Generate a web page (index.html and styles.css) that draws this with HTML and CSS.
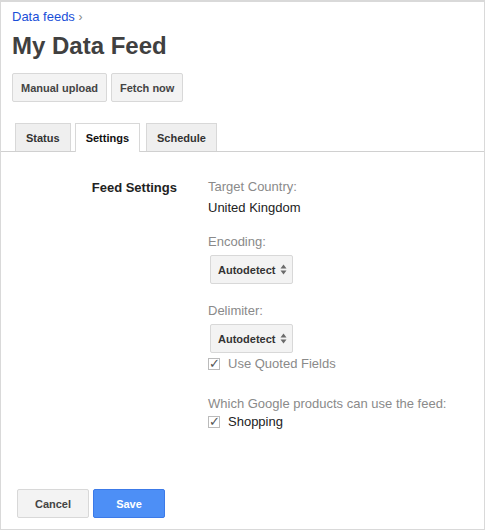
FILE: index.html
```html
<!DOCTYPE html>
<html>

<head>
  <meta charset="utf-8">
  <meta name="viewport" content="width=device-width">
  <title>My Data Feed</title>
  <link rel="stylesheet" href="styles.css">
</head>

<body>
  <div class="frame">
    <header class="top">
      <a class="crumb" href="#">Data feeds</a> <span class="crumb-arrow">›</span>
      <h1>My Data Feed</h1>
      <div class="actions">
        <button class="btn">Manual upload</button>
        <button class="btn">Fetch now</button>
      </div>
    </header>

    <nav class="tabs">
      <span class="tab">Status</span>
      <span class="tab active">Settings</span>
      <span class="tab">Schedule</span>
    </nav>

    <main class="settings">
      <div class="label">Feed Settings</div>
      <div class="fields">
        <div class="field">
          <div class="name">Target Country:</div>
          <div class="value">United Kingdom</div>
        </div>

        <div class="field">
          <div class="name">Encoding:</div>
          <span class="select">Autodetect
            <svg width="7" height="11" viewBox="0 0 7 11"><path d="M3.5 0.5L6.5 4.5H0.5Z M3.5 10.5L6.5 6.5H0.5Z" fill="#6b6b6b"/></svg>
          </span>
        </div>

        <div class="field">
          <div class="name">Delimiter:</div>
          <span class="select">Autodetect
            <svg width="7" height="11" viewBox="0 0 7 11"><path d="M3.5 0.5L6.5 4.5H0.5Z M3.5 10.5L6.5 6.5H0.5Z" fill="#6b6b6b"/></svg>
          </span>
          <label class="check muted"><span class="box">&#10003;</span> Use Quoted Fields</label>
        </div>

        <div class="field products">
          <div class="name">Which Google products can use the feed:</div>
          <label class="check"><span class="box">&#10003;</span> Shopping</label>
        </div>
      </div>
    </main>

    <footer class="bottom">
      <button class="btn">Cancel</button>
      <button class="btn primary">Save</button>
    </footer>
  </div>
</body>

</html>
```

FILE: styles.css
```css
* {
  box-sizing: border-box;
}

body {
  margin: 0;
  background: white;
  font-family: Arial, "Liberation Sans", sans-serif;
  font-size: 13px;
  color: #222;
}

.frame {
  width: 485px;
  height: 530px;
  border: 1px solid #d9d9d9;
  border-top-width: 2px;
  display: flex;
  flex-direction: column;
}

.top {
  padding: 7px 11px 0;
}

.crumb {
  color: #1a4fd8;
  text-decoration: none;
  font-size: 13px;
}

.crumb-arrow {
  color: #888;
  font-size: 12px;
}

h1 {
  margin: 8px 0 0;
  font-size: 24px;
  font-weight: bold;
  color: #404040;
  line-height: 28px;
}

.actions {
  display: flex;
  gap: 4px;
  margin-top: 13px;
}

.btn {
  font-family: Arial, "Liberation Sans", sans-serif;
  font-size: 11px;
  font-weight: bold;
  color: #444;
  background: #f3f3f3;
  border: 1px solid #d8d8d8;
  border-radius: 2px;
  height: 29px;
  padding: 0 8px;
}

.tabs {
  display: flex;
  gap: 4px;
  padding: 21px 0 0 14px;
  border-bottom: 1px solid #d0d0d0;
}

.tab {
  font-size: 11px;
  font-weight: bold;
  color: #333;
  background: #efefef;
  border: 1px solid #d8d8d8;
  border-bottom: none;
  padding: 0 10px;
  height: 28px;
  line-height: 28px;
  margin-bottom: -1px;
}

.tab.active {
  background: white;
  color: #111;
  height: 29px;
  padding: 0 10px;
  margin-right: 2px;
}

.settings {
  display: flex;
  padding-top: 28px;
  flex-grow: 1;
}

.label {
  width: 176px;
  text-align: right;
  font-weight: bold;
  font-size: 13px;
  color: #222;
}

.fields {
  padding-left: 31px;
  display: flex;
  flex-direction: column;
  gap: 20px;
}

.name {
  color: #8a8a8a;
  font-size: 13px;
  line-height: 15px;
  margin-top: -1px;
}

.value {
  margin-top: 6px;
  font-size: 13px;
}

.select {
  display: inline-flex;
  align-items: center;
  gap: 5px;
  margin: 6px 0 0 2px;
  height: 29px;
  width: 83px;
  padding: 0 4px 0 7px;
  background: #f3f3f3;
  border: 1px solid #d8d8d8;
  border-radius: 2px;
  font-size: 11px;
  font-weight: bold;
  color: #333;
}

.check {
  display: flex;
  align-items: center;
  gap: 8px;
  margin-top: 3px;
  font-size: 13px;
  color: #222;
}

.check.muted {
  color: #8a8a8a;
}

.products {
  margin-top: 6px;
}

.products .check {
  margin-top: 3px;
}

.box {
  width: 12px;
  height: 12px;
  border: 1px solid #bbb;
  background: white;
  font-size: 13px;
  line-height: 10px;
  color: #555;
  display: inline-flex;
  justify-content: center;
}

.bottom {
  display: flex;
  gap: 4px;
  padding: 0 0 11px 16px;
}

.bottom .btn {
  width: 72px;
}

.primary {
  background: #4d8ff6;
  border-color: #3c7ae8;
  color: white;
}
```
